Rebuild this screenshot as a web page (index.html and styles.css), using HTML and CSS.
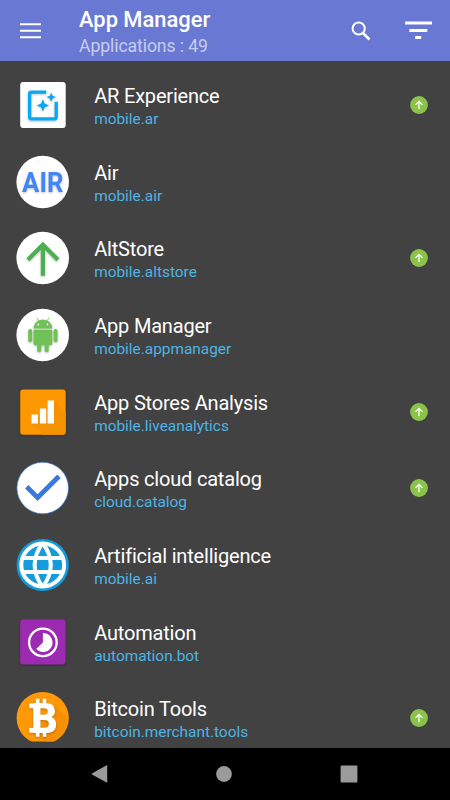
FILE: index.html
```html
<!DOCTYPE html>
<html lang="en">
<head>
<meta charset="utf-8">
<title>App Manager</title>
<link rel="stylesheet" href="styles.css">
</head>
<body>
<div class="screen">
  <header class="bar">
    <svg class="menu" viewBox="0 0 22 16"><path d="M0 1.2h21M0 7.8h21M0 14.2h21" stroke="#fff" stroke-width="2"/></svg>
    <div class="heading">
      <h1>App Manager</h1>
      <p>Applications : 49</p>
    </div>
    <svg class="search" viewBox="0 0 20 20"><circle cx="7.7" cy="7.5" r="6.1" fill="none" stroke="#fff" stroke-width="2"/><path d="M12 12l6.5 6.5" stroke="#fff" stroke-width="2.6"/></svg>
    <svg class="filter" viewBox="0 0 27 19"><path d="M0 2h27M4.3 9.5h18M10.2 16.5h6" stroke="#fff" stroke-width="3"/></svg>
  </header>

  <main class="list">
    <div class="row">
      <svg class="icon" viewBox=".3 0 54 54"><rect x="4.5" y="4" width="45.5" height="46" rx="3" fill="#fff"/><g class="raised"><path d="M30.5 14.2H15.6q-1.7 0-1.7 1.7v23.2q0 1.7 1.7 1.7h23.2q1.7 0 1.7-1.7V23.8" fill="none" stroke="#08a9f4" stroke-width="3.3"/><path d="M27.2 21.2l1.8 4.4 4.4 1.8-4.4 1.8-1.8 4.4-1.8-4.4-4.4-1.8 4.4-1.8zM35.5 14.4l1.4 3.3 3.3 1.4-3.3 1.4-1.4 3.3-1.4-3.3-3.3-1.4 3.3-1.4z" fill="#08a9f4"/></g></svg>
      <div class="info"><h2>AR Experience</h2><p>mobile.ar</p></div>
      <svg class="badge" viewBox="0 0 18 18"><circle cx="9" cy="9" r="8.9"/><path d="M9 13.2V5.5M5.5 8.9L9 5.4l3.5 3.5"/></svg>
    </div>
    <div class="row">
      <svg class="icon" viewBox=".3 0 54 54"><circle cx="27" cy="27" r="26.3" fill="#fff"/><text class="raised air" x="6.4" y="37" textLength="41.3" lengthAdjust="spacingAndGlyphs">AIR</text></svg>
      <div class="info"><h2>Air</h2><p>mobile.air</p></div>
    </div>
    <div class="row">
      <svg class="icon" viewBox=".3 0 54 54"><circle cx="27" cy="27" r="26.3" fill="#fff"/><path class="raised" d="M27.2 44.8V15M12.2 28.8l15-15 15 15" fill="none" stroke="#4caf50" stroke-width="4.2"/></svg>
      <div class="info"><h2>AltStore</h2><p>mobile.altstore</p></div>
      <svg class="badge" viewBox="0 0 18 18"><circle cx="9" cy="9" r="8.9"/><path d="M9 13.2V5.5M5.5 8.9L9 5.4l3.5 3.5"/></svg>
    </div>
    <div class="row">
      <svg class="icon" viewBox=".3 0 54 54"><circle cx="27" cy="27" r="26.3" fill="#fff"/><g class="raised" fill="#70c156"><path d="M17.8 20.4a9.4 9 0 0 1 18.8 0zM17.8 21.7h18.8v13.7q0 1.8-1.8 1.8H19.6q-1.8 0-1.8-1.8z"/><rect x="12.5" y="21" width="4" height="13.3" rx="2"/><rect x="37.9" y="21" width="4" height="13.3" rx="2"/><rect x="21.5" y="34" width="4.1" height="10.3" rx="2"/><rect x="28.9" y="34" width="4.1" height="10.3" rx="2"/><path d="M21 9.7l2.3 3.4M33.4 9.7l-2.3 3.4" stroke="#70c156" stroke-width=".8"/></g><circle cx="22.6" cy="16.4" r=".9" fill="#fff"/><circle cx="31.8" cy="16.4" r=".9" fill="#fff"/></svg>
      <div class="info"><h2>App Manager</h2><p>mobile.appmanager</p></div>
    </div>
    <div class="row">
      <svg class="icon" viewBox=".3 0 54 54"><g class="raised"><rect x="4.5" y="4.4" width="45.5" height="45.3" rx="3" fill="#ff9800"/></g><path d="M38.2 15.4L50 27.2v19.5q0 3-3 3H27.1L15.8 38.4z" fill="#f59200"/><path d="M15.8 29.4h6.4v9h-6.4zM24.2 23.4h6.3v15h-6.3zM31.9 15.4h6.3v23h-6.3z" fill="#fff"/></svg>
      <div class="info"><h2>App Stores Analysis</h2><p>mobile.liveanalytics</p></div>
      <svg class="badge" viewBox="0 0 18 18"><circle cx="9" cy="9" r="8.9"/><path d="M9 13.2V5.5M5.5 8.9L9 5.4l3.5 3.5"/></svg>
    </div>
    <div class="row">
      <svg class="icon" viewBox=".3 0 54 54"><circle cx="27" cy="27" r="25.8" fill="#fff" stroke="#3b78dc" stroke-width=".7"/><path d="M11 25.8l10.9 10.9L43.3 15.3" fill="none" stroke="#3b78dc" stroke-width="4.8"/></svg>
      <div class="info"><h2>Apps cloud catalog</h2><p>cloud.catalog</p></div>
      <svg class="badge" viewBox="0 0 18 18"><circle cx="9" cy="9" r="8.9"/><path d="M9 13.2V5.5M5.5 8.9L9 5.4l3.5 3.5"/></svg>
    </div>
    <div class="row">
      <svg class="icon" viewBox=".3 0 54 54"><circle cx="27" cy="27" r="26.1" fill="#149bdc"/><g fill="none" stroke="#fff" stroke-width="4"><circle cx="27" cy="27" r="21.4"/><path d="M7.5 20.1h39M7.5 33.9h39M27 5C16 20 16 34 27 49M27 5c11 15 11 29 0 44"/></g></svg>
      <div class="info"><h2>Artificial intelligence</h2><p>mobile.ai</p></div>
    </div>
    <div class="row">
      <svg class="icon" viewBox=".3 0 54 54"><g class="raised"><rect x="4.5" y="4.4" width="45.3" height="45.2" rx="3" fill="#9c2bb2"/></g><circle cx="27.2" cy="27.4" r="13.8" fill="none" stroke="#fff" stroke-width="2.3"/><path d="M27.2 18v9.4l-6.7 6.7A9.5 9.5 0 1 0 27.2 18z" fill="#fff"/></svg>
      <div class="info"><h2>Automation</h2><p>automation.bot</p></div>
    </div>
    <div class="row">
      <svg class="icon clipped" viewBox=".3 0 54 54"><circle cx="27" cy="27" r="26.1" fill="#ff9909"/><path d="M39.5 14.5l12 12.3a26 26 0 0 1-19.3 25.7L20 44z" fill="#f59005"/><g class="raised" fill="#fff"><text class="coin" x="14.1" y="41.7" textLength="29" lengthAdjust="spacingAndGlyphs">B</text><path d="M13.4 12.5h5v4.8h-5zM13.4 36.9h5v4.8h-5zM20.2 7.8h3.6v6h-3.6zM27 7.8h3.6v6H27zM20.2 40h3.6v5.8h-3.6zM27 40h3.6v5.8H27z"/></g></svg>
      <div class="info"><h2>Bitcoin Tools</h2><p>bitcoin.merchant.tools</p></div>
      <svg class="badge" viewBox="0 0 18 18"><circle cx="9" cy="9" r="8.9"/><path d="M9 13.2V5.5M5.5 8.9L9 5.4l3.5 3.5"/></svg>
    </div>
  </main>

  <nav class="nav">
    <svg viewBox="0 0 18 18"><path d="M16.2.6v16.8Q16.2 18 15.6 17.6L1 9.4Q.4 9 1 8.6L15.6.2Q16.2 0 16.2.6z"/></svg>
    <svg viewBox="0 0 18 18"><circle cx="9" cy="9" r="7.9"/></svg>
    <svg viewBox="0 0 18 18"><rect x=".6" y=".6" width="16.8" height="16.8" rx="1"/></svg>
  </nav>
</div>
</body>
</html>
```
FILE: styles.css
```css
* { box-sizing: border-box; }
body, h1, h2, p { margin: 0; font-weight: 400; }
body { font-family: Roboto, sans-serif; background: #000; }
svg { display: block; flex: none; }

.screen { width: 450px; height: 800px; display: flex; flex-direction: column; overflow: hidden; background: #424242; }

.bar { height: 61px; flex: none; display: flex; align-items: center; padding: 0 18px 0 20px; background: #6979d3; }
.menu { width: 22px; height: 16px; }
.heading { flex: 1; margin-left: 37px; }
.heading h1 { font-size: 21.9px; line-height: 26px; font-weight: 500; color: #fff; padding-top: 5px; }
.heading p { font-size: 17.6px; line-height: 26px; letter-spacing: -0.08px; color: #c6ccf0; white-space: nowrap; }
.search { width: 20px; height: 20px; margin-right: 34px; }
.filter { width: 27px; height: 19px; }

.list { height: 687px; flex: none; padding-top: 5.6px; overflow: hidden; }
.row { height: 76.67px; display: flex; align-items: center; padding: 0 22.5px 0 15.7px; }
.icon { width: 54px; height: 54px; }
.clipped { clip-path: inset(0 0 3.6px 0); }
.raised { filter: drop-shadow(0 1px 1px rgba(0, 0, 0, .25)); }
.air { font: 700 28px Roboto, sans-serif; fill: #4285f8; }
.coin { font: 700 40px "DejaVu Sans", sans-serif; }
.info { flex: 1; margin-left: 24.5px; }
.info h2 { font-size: 20px; line-height: 24px; letter-spacing: -0.19px; color: #fff; margin-top: 4px; }
.info p { font-size: 15.4px; line-height: 22px; color: #4db4e6; }
.badge { width: 18px; height: 18px; }
.badge circle { fill: #8bc34a; }
.badge path { fill: none; stroke: #fff; stroke-width: 1.3; }

.nav { flex: 1; display: flex; align-items: center; justify-content: space-between; padding: 0 92px 0 90.6px; background: #000; }
.nav svg { width: 18px; height: 18px; fill: #9b9b9b; }
```
